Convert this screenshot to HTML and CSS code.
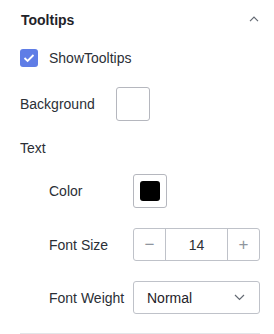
FILE: index.html
```html
<!DOCTYPE html>
<html>
<head>
<meta charset="utf-8">
<link rel="stylesheet" href="styles.css">
</head>
<body>
<div class="panel">
  <div class="header">
    <span class="title">Tooltips</span>
    <svg class="chev-up" width="10" height="6" viewBox="0 0 10 6"><path d="M1 5.2 L5 1.2 L9 5.2" fill="none" stroke="#646a73" stroke-width="1.2"/></svg>
  </div>
  <div class="row check-row">
    <span class="checkbox"><svg width="12" height="10" viewBox="0 0 12 10"><path d="M1.5 5 L4.6 8 L10.5 2" fill="none" stroke="#fff" stroke-width="1.8"/></svg></span>
    <span class="check-label">ShowTooltips</span>
  </div>
  <div class="row bg-row">
    <span class="label top-label">Background</span>
    <span class="swatch"></span>
  </div>
  <div class="row text-row">
    <span class="label">Text</span>
  </div>
  <div class="row sub color-row">
    <span class="label sub-label">Color</span>
    <span class="swatch padded"><span class="swatch-fill"></span></span>
  </div>
  <div class="row sub size-row">
    <span class="label sub-label">Font Size</span>
    <div class="stepper">
      <span class="step-btn">−</span>
      <span class="step-val">14</span>
      <span class="step-btn">+</span>
    </div>
  </div>
  <div class="row sub weight-row">
    <span class="label sub-label">Font Weight</span>
    <div class="select">
      <span>Normal</span>
      <svg width="11" height="7" viewBox="0 0 11 7"><path d="M1 1 L5.5 5.5 L10 1" fill="none" stroke="#646a73" stroke-width="1.2"/></svg>
    </div>
  </div>
  <div class="divider"></div>
</div>
</body>
</html>
```
FILE: styles.css
```css
html, body {
  margin: 0;
  padding: 0;
  background: #fff;
}
body {
  font-family: "Liberation Sans", Arial, sans-serif;
  font-size: 14px;
  color: #2b2f36;
}
.panel {
  padding: 0 14px 0 20px;
}
.header {
  height: 40px;
  display: flex;
  align-items: center;
  justify-content: space-between;
}
.title {
  font-weight: bold;
  color: #1f2329;
  padding-left: 1px;
}
.chev-up {
  margin-right: 1px;
  margin-top: -2px;
}
.row {
  display: flex;
  align-items: center;
}
.check-row {
  height: 36px;
}
.checkbox {
  width: 18px;
  height: 18px;
  border-radius: 3px;
  background: #5f7de6;
  display: flex;
  align-items: center;
  justify-content: center;
}
.check-label {
  margin-left: 11px;
}
.bg-row {
  height: 34px;
  margin-top: 11px;
}
.top-label {
  width: 96px;
}
.text-row {
  height: 20px;
  margin-top: 17px;
}
.sub {
  padding-left: 29px;
}
.sub-label {
  width: 84px;
}
.color-row {
  height: 34px;
  margin-top: 16px;
}
.swatch {
  box-sizing: border-box;
  width: 34px;
  height: 34px;
  border: 1px solid #b5b7be;
  border-radius: 3px;
  background: #fff;
}
.swatch.padded {
  padding: 6px;
}
.swatch-fill {
  display: block;
  width: 20px;
  height: 20px;
  background: #000;
  border-radius: 3px;
}
.size-row {
  height: 33px;
  margin-top: 20px;
}
.stepper {
  box-sizing: border-box;
  width: 127px;
  height: 33px;
  border: 1px solid #bfc2c9;
  border-radius: 3px;
  display: flex;
}
.step-btn {
  width: 31px;
  display: flex;
  align-items: center;
  justify-content: center;
  color: #8f959e;
  font-size: 17px;
}
.step-val {
  flex: 1;
  border-left: 1px solid #bfc2c9;
  border-right: 1px solid #bfc2c9;
  display: flex;
  align-items: center;
  justify-content: center;
}
.weight-row {
  height: 33px;
  margin-top: 20px;
}
.select {
  box-sizing: border-box;
  width: 127px;
  height: 33px;
  border: 1px solid #bfc2c9;
  border-radius: 3px;
  display: flex;
  align-items: center;
  justify-content: space-between;
  padding: 0 14px 0 13px;
  color: #1f2329;
}
.divider {
  margin-top: 19px;
  width: 240px;
  height: 1px;
  background: #e3e5e8;
}
```
